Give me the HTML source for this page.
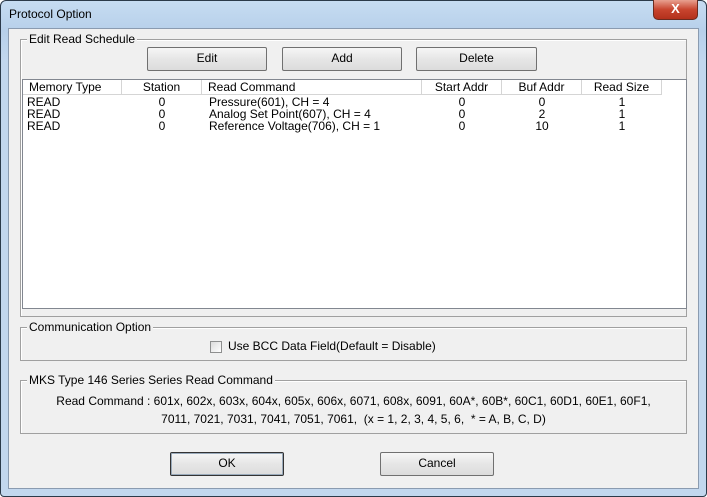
<!DOCTYPE html>
<html><head><style>
*{margin:0;padding:0;box-sizing:border-box}
body{width:707px;height:497px;overflow:hidden;background:#fff;font-family:"Liberation Sans",sans-serif;font-size:12px;color:#000}
#win{position:absolute;left:0;top:0;width:707px;height:497px;border:1px solid #2b3a4a;border-radius:6px 6px 4px 4px;background:linear-gradient(#c6dcf2,#b7d0ea 30px,#c2d7ee 60px,#c2d7ee);}
#title{position:absolute;left:8px;top:6px;font-size:12px}
#close{position:absolute;left:652px;top:-1px;width:45px;height:20px;border:1px solid #6b2b20;border-top:none;border-radius:0 0 5px 5px;background:linear-gradient(#e8a090,#c8452f 50%,#b3301c);color:#fff;font-weight:bold;text-align:center;font-size:13px;line-height:18px}
#client{position:absolute;left:7px;top:27px;width:691px;height:461px;background:#f0f0f0;border:1px solid #8a9bb0}
.grp{position:absolute;border:1px solid #a0a0a0;box-shadow:1px 1px 0 #fff inset}
.lg{position:absolute;top:-8px;left:6px;background:#f0f0f0;padding:0 2px;line-height:14px}
.btn{position:absolute;border:1px solid #707070;background:linear-gradient(#f6f6f6,#e6e6e6 50%,#dcdcdc);text-align:center;line-height:21px;border-radius:2px}
.abs{position:absolute}
#list{position:absolute;left:13px;top:50px;width:665px;height:230px;background:#fff;border:1px solid #828790}
.hd{position:absolute;top:0;height:15px;line-height:14px;border-right:1px solid #d5d5d5;border-bottom:1px solid #d5d5d5;text-align:center;background:#fff}
.r{position:absolute;line-height:12px}
.c{text-align:center}
</style></head><body>
<div id="win">
<div id="title">Protocol Option</div>
<div id="close">X</div>
<div id="client">
 <div class="grp" style="left:11px;top:10px;width:667px;height:278px"><span class="lg">Edit Read Schedule</span></div>
 <div class="btn" style="left:138px;top:18px;width:120px;height:24px">Edit</div>
 <div class="btn" style="left:273px;top:18px;width:120px;height:24px">Add</div>
 <div class="btn" style="left:407px;top:18px;width:121px;height:24px">Delete</div>
 <div id="list">
  <div class="hd" style="left:0;width:99px;text-align:left;padding-left:6px">Memory Type</div>
  <div class="hd" style="left:99px;width:80px">Station</div>
  <div class="hd" style="left:179px;width:220px;text-align:left;padding-left:6px">Read Command</div>
  <div class="hd" style="left:399px;width:80px">Start Addr</div>
  <div class="hd" style="left:479px;width:80px">Buf Addr</div>
  <div class="hd" style="left:559px;width:80px">Read Size</div>
  <div class="r" style="left:4px;top:16px">READ<br>READ<br>READ</div>
  <div class="r c" style="left:99px;width:80px;top:16px">0<br>0<br>0</div>
  <div class="r" style="left:186px;top:16px">Pressure(601), CH = 4<br>Analog Set Point(607), CH = 4<br>Reference Voltage(706), CH = 1</div>
  <div class="r c" style="left:399px;width:80px;top:16px">0<br>0<br>0</div>
  <div class="r c" style="left:479px;width:80px;top:16px">0<br>2<br>10</div>
  <div class="r c" style="left:559px;width:80px;top:16px">1<br>1<br>1</div>
 </div>
 <div class="grp" style="left:11px;top:298px;width:667px;height:34px"><span class="lg">Communication Option</span></div>
 <div class="abs" style="left:201px;top:312px;width:12px;height:12px;border:1px solid #8e8f8f;background:linear-gradient(135deg,#dcdcdc,#fff)"></div>
 <div class="abs" style="left:219px;top:310px">Use BCC Data Field(Default = Disable)</div>
 <div class="grp" style="left:11px;top:351px;width:667px;height:54px"><span class="lg">MKS Type 146 Series Series Read Command</span></div>
 <div class="abs" style="left:11px;top:363px;width:667px;text-align:center;line-height:18px">Read Command : 601x, 602x, 603x, 604x, 605x, 606x, 6071, 608x, 6091, 60A*, 60B*, 60C1, 60D1, 60E1, 60F1,<br>7011, 7021, 7031, 7041, 7051, 7061,&nbsp; (x = 1, 2, 3, 4, 5, 6,&nbsp; * = A, B, C, D)</div>
 <div class="btn" style="left:161px;top:423px;width:114px;height:24px;border:1px solid #333;box-shadow:inset 0 0 0 1px #9ab">OK</div>
 <div class="btn" style="left:371px;top:423px;width:114px;height:24px">Cancel</div>
</div>
</div>
</body></html>
